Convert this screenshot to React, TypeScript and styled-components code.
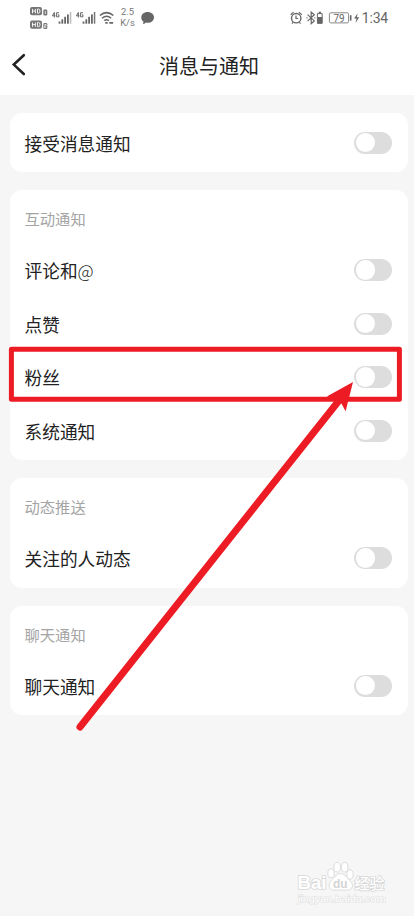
import React from "react";
import styled, { createGlobalStyle } from "styled-components";

const GlobalStyle = createGlobalStyle`
  * { box-sizing: border-box; }
  body {
    margin: 0;
    background: #f6f6f6;
    font-family: "Noto Sans CJK SC", sans-serif;
  }
`;

const Screen = styled.main`
  position: relative;
  width: 414px;
  height: 916px;
  overflow: hidden;
  background: #f6f6f6;
`;

const Top = styled.header`
  height: 95px;
  background: #fff;
`;

const StatusBar = styled.div`
  display: flex;
  justify-content: space-between;
  height: 36px;
  padding: 0 26px 0 30px;
  color: #666;
  font-family: Roboto, sans-serif;
`;

const StatusGroup = styled.div`
  display: flex;
  align-items: center;
  height: 36px;
`;

const Speed = styled.div`
  width: 16px;
  margin-left: 3.5px;
  font-size: 9.4px;
  line-height: 10.8px;
  text-align: center;
  white-space: nowrap;
  color: #777;
`;

const Clock = styled.span`
  margin-left: 1px;
  font-size: 14px;
  line-height: 36px;
  letter-spacing: -0.2px;
`;

const NavBar = styled.div`
  display: grid;
  grid-template-columns: 40px 1fr 36px;
  align-items: center;
  height: 59px;
`;

const BackButton = styled.button`
  display: flex;
  width: 40px;
  height: 40px;
  margin-top: -2px;
  padding: 8px 0 0 10px;
  border: 0;
  background: none;
`;

const Title = styled.h1`
  margin: 0;
  color: #222;
  font-size: 20px;
  font-weight: 400;
  line-height: 58px;
  text-align: center;
`;

const Cards = styled.div`
  display: flex;
  flex-direction: column;
  gap: 18px;
  padding: 18px 6px 0 10px;
`;

const Card = styled.section`
  padding: 2.8px 0;
  border-radius: 12px;
  background: #fff;
`;

const SectionTitle = styled.h2`
  display: flex;
  align-items: center;
  height: 50.4px;
  margin: 0;
  padding-left: 14.5px;
  color: #a4a4a4;
  font-size: 15.3px;
  font-weight: 400;
`;

const Row = styled.div`
  display: flex;
  align-items: center;
  justify-content: space-between;
  height: 53.5px;
  padding: 0 16px 0 14.5px;
  color: #222;
  font-size: 17.7px;
`;

const At = styled.span`
  font-weight: 300;
`;

const Switch = styled.button`
  display: flex;
  align-items: center;
  width: 37.7px;
  height: 22px;
  padding: 0 1.4px;
  border: 0;
  border-radius: 11px;
  background: #ddd;
`;

const Knob = styled.span`
  width: 19.2px;
  height: 19.2px;
  border-radius: 50%;
  background: #fff;
`;

const Annotation = styled.svg`
  position: absolute;
  inset: 0;
  pointer-events: none;
`;

const Watermark = styled.svg`
  position: absolute;
  left: 290px;
  top: 856px;
`;

const LeftIcons = () => (
  <svg width="86" height="36" viewBox="30 0 86 36" fill="#666">
    {[7, 20.5].map((y, i) => (
      <g key={y}>
        <rect x="30" y={y} width="12" height="8.3" rx="2" fill="#777" />
        <path
          d={`M32.5 ${y + 2}v4.3M35.4 ${y + 2}v4.3M32.5 ${y + 4.1}h2.9M37.5 ${y + 2}h1q1.5 0 1.5 2.1t-1.5 2.1h-1z`}
          fill="none"
          stroke="#fff"
          strokeWidth="0.9"
        />
        <rect x="43.3" y={y + 2.5} width="4" height="6" rx="1.2" fill="#777" />
        <path
          d={i === 0 ? `M45.3 ${y + 4}v3` : `M44.4 ${y + 4}h1.7v1.4h-1.7v1.5h1.8`}
          fill="none"
          stroke="#fff"
          strokeWidth="0.7"
        />
      </g>
    ))}
    {[52, 76].map((x) => (
      <g key={x}>
        <path
          d={`M${x + 2.4} 17.4v-5l-2 3.4h3M${x + 6.9} 12.7h-2.3v4.1h2.3v-2h-1`}
          fill="none"
          stroke="#666"
          strokeWidth="1"
        />
        <rect x={x + 6.6} y="21.5" width="1.8" height="2.2" />
        <rect x={x + 9.4} y="19.3" width="1.8" height="4.4" />
        <rect x={x + 12.2} y="16.8" width="1.8" height="6.9" />
        <rect x={x + 15} y="14.4" width="1.8" height="9.3" />
        <rect x={x + 17.8} y="12" width="1.5" height="11.7" fill={x === 52 ? "#bbb" : "#777"} />
      </g>
    ))}
    <g fill="none" stroke="#666" strokeWidth="1.5">
      <path d="M99.8 15.5q6.8-5.8 13.6 0M102 18.2q4.6-4 9.2 0M104.3 20.7q2.3-1.8 4.6 0" />
      <path d="M105.3 22.9h2.4M109.3 22.9h3.8" strokeWidth="1.8" />
    </g>
  </svg>
);

const ChatIcon = () => (
  <svg width="20" height="36" viewBox="0 0 20 36" fill="#666">
    <path d="M11.6 12.1c3.7 0 6.4 2.3 6.4 5.3s-2.7 5.3-6.4 5.3q-1 0-1.8-.2-1.3 1.5-2.8 1.6l.5-2.5c-1.4-.9-2.2-2.5-2.2-4.2 0-3 2.6-5.3 6.3-5.3z" />
  </svg>
);

const RightIcons = () => (
  <svg width="71" height="36" viewBox="290 0 71 36" fill="none" stroke="#666">
    <circle cx="296.2" cy="18.2" r="4.7" strokeWidth="1.4" />
    <path d="M296 15.5v3h2.2M290.6 14.7l3-2.6M298.8 12.1l3 2.6M293 22.4l-1.1 1.2M299.4 22.4l1.1 1.2" strokeWidth="1.2" />
    <path d="M307.6 14.6l6.7 6.3-3.1 2.8V12l3.1 2.7-6.7 6.4M306.5 17.8h1M314.3 17.8h1" strokeWidth="1.2" />
    <path d="M317.4 23.4v-9.8h4.8v9.8z" strokeWidth="1" />
    <path d="M318.7 12.4h2.3" strokeWidth="1.3" />
    <rect x="317.5" y="17" width="4.7" height="6" fill="#666" stroke="none" />
    <rect x="329.4" y="12.8" width="19.2" height="10.1" rx="1.5" stroke="#888" strokeWidth="1" />
    <path d="M350.7 15.2v5.4" strokeWidth="1.6" />
    <path d="M357.7 13.2l-3.6 5.3h2.4l-1 4.4 3.7-5.7h-2.4z" fill="#666" stroke="none" />
    <text x="339.1" y="21.5" fill="#666" stroke="none" fontFamily="Roboto" fontSize="10" textAnchor="middle">
      79
    </text>
  </svg>
);

type Item = { label: string; at?: boolean };
type Group = { title?: string; items: Item[] };

const groups: Group[] = [
  { items: [{ label: "接受消息通知" }] },
  {
    title: "互动通知",
    items: [{ label: "评论和", at: true }, { label: "点赞" }, { label: "粉丝" }, { label: "系统通知" }],
  },
  { title: "动态推送", items: [{ label: "关注的人动态" }] },
  { title: "聊天通知", items: [{ label: "聊天通知" }] },
];

export default function App() {
  return (
    <Screen>
      <GlobalStyle />
      <Top>
        <StatusBar>
          <StatusGroup>
            <LeftIcons />
            <Speed>
              2.5
              <br />
              K/s
            </Speed>
            <ChatIcon />
          </StatusGroup>
          <StatusGroup>
            <RightIcons />
            <Clock>1:34</Clock>
          </StatusGroup>
        </StatusBar>
        <NavBar>
          <BackButton aria-label="返回">
            <svg width="18" height="24" viewBox="0 0 18 24" fill="none" stroke="#222" strokeWidth="2.6">
              <path d="M13.8 2.2L3.8 11.6l10 9.4" strokeLinecap="round" />
            </svg>
          </BackButton>
          <Title>消息与通知</Title>
        </NavBar>
      </Top>
      <Cards>
        {groups.map((group, index) => (
          <Card key={index}>
            {group.title && <SectionTitle>{group.title}</SectionTitle>}
            {group.items.map((item) => (
              <Row key={item.label}>
                <span>
                  {item.label}
                  {item.at && <At>@</At>}
                </span>
                <Switch role="switch" aria-checked={false} aria-label={item.label}>
                  <Knob />
                </Switch>
              </Row>
            ))}
          </Card>
        ))}
      </Cards>
      <Watermark width="110" height="55" viewBox="290 856 110 55" fill="#fff" stroke="#d8d8d8" strokeWidth="0.9">
        <ellipse cx="331" cy="873.3" rx="3.2" ry="4.4" />
        <ellipse cx="337.1" cy="867.2" rx="3.3" ry="4.8" />
        <ellipse cx="344.7" cy="867.2" rx="3.3" ry="4.8" />
        <ellipse cx="350" cy="874.5" rx="3.2" ry="4.6" />
        <path d="M340.5 873.5c5 0 6.5 5 9.5 7.3 4.8 4 2 9.8-3.2 9.4-4-.2-8-.2-12 0-5.5.4-7.6-5.8-3.6-9.4 3.8-3 4.5-7.3 9.3-7.3z" />
        <g fontFamily="Liberation Sans" fontWeight="700" paintOrder="stroke" strokeWidth="1.6">
          <text x="297.5" y="889.3" fontSize="18.5" textLength="29" lengthAdjust="spacingAndGlyphs">Bai</text>
          <text x="333" y="888" fontSize="12.5" fill="#d4d4d4" stroke="none" textLength="14.5" lengthAdjust="spacingAndGlyphs">du</text>
          <text x="354.5" y="888.5" fontSize="15" fontFamily="Noto Sans CJK SC" fontWeight="500">经验</text>
          <text x="298" y="902" fontSize="9.5" fontWeight="400" strokeWidth="1.2" stroke="#e2e2e2" textLength="87.5" lengthAdjust="spacingAndGlyphs">jingyan.baidu.com</text>
        </g>
      </Watermark>
      <Annotation width="414" height="916" viewBox="0 0 414 916">
        <rect x="11.4" y="349.2" width="388" height="50" fill="none" stroke="#ed1c24" strokeWidth="5" strokeLinejoin="round" />
        <path d="M80 727L341 398" stroke="#ed1c24" strokeWidth="7" strokeLinecap="round" />
        <path d="M353 382L326.8 396.4l10.4 2.6 4.2 4.4 4.2 7.8z" fill="#ed1c24" />
      </Annotation>
    </Screen>
  );
}
